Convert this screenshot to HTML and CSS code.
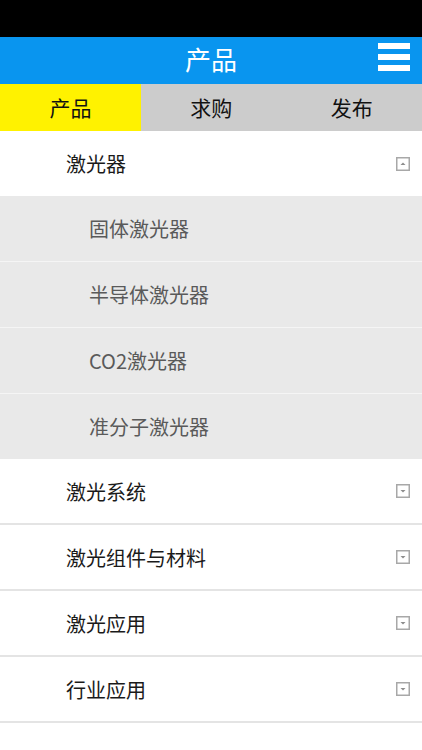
FILE: index.html
```html
<!DOCTYPE html>
<html lang="zh-CN">
<head>
<meta charset="utf-8">
<title>产品</title>
<link rel="stylesheet" href="styles.css">
</head>
<body>
<div class="status"></div>
<header class="topbar">
  <h1 class="title">产品</h1>
  <button class="menu" aria-label="菜单"><span></span><span></span><span></span></button>
</header>
<nav class="tabs">
  <div class="tab active">产品</div>
  <div class="tab">求购</div>
  <div class="tab">发布</div>
</nav>
<ul class="list">
  <li class="row open">
    <span class="label">激光器</span>
    <svg class="toggle" viewBox="0 0 14 14"><rect x="0.75" y="0.75" width="12.5" height="12.5" fill="none" stroke="#a8a8a8" stroke-width="1.5"/><path d="M4.5 8 L9.5 8 L7 5.5 Z" fill="#8c8c8c"/></svg>
  </li>
  <li class="sub">固体激光器</li>
  <li class="sub">半导体激光器</li>
  <li class="sub">CO2激光器</li>
  <li class="sub">准分子激光器</li>
  <li class="row">
    <span class="label">激光系统</span>
    <svg class="toggle" viewBox="0 0 14 14"><rect x="0.75" y="0.75" width="12.5" height="12.5" fill="none" stroke="#a8a8a8" stroke-width="1.5"/><path d="M4.5 6 L9.5 6 L7 8.5 Z" fill="#8c8c8c"/></svg>
  </li>
  <li class="row">
    <span class="label">激光组件与材料</span>
    <svg class="toggle" viewBox="0 0 14 14"><rect x="0.75" y="0.75" width="12.5" height="12.5" fill="none" stroke="#a8a8a8" stroke-width="1.5"/><path d="M4.5 6 L9.5 6 L7 8.5 Z" fill="#8c8c8c"/></svg>
  </li>
  <li class="row">
    <span class="label">激光应用</span>
    <svg class="toggle" viewBox="0 0 14 14"><rect x="0.75" y="0.75" width="12.5" height="12.5" fill="none" stroke="#a8a8a8" stroke-width="1.5"/><path d="M4.5 6 L9.5 6 L7 8.5 Z" fill="#8c8c8c"/></svg>
  </li>
  <li class="row">
    <span class="label">行业应用</span>
    <svg class="toggle" viewBox="0 0 14 14"><rect x="0.75" y="0.75" width="12.5" height="12.5" fill="none" stroke="#a8a8a8" stroke-width="1.5"/><path d="M4.5 6 L9.5 6 L7 8.5 Z" fill="#8c8c8c"/></svg>
  </li>
</ul>
</body>
</html>
```
FILE: styles.css
```css
* { box-sizing: border-box; }
html, body { margin: 0; padding: 0; background: #fff; }
body {
  font-family: "Noto Sans CJK SC", "Noto Sans", sans-serif;
  width: 422px;
}
.status { height: 37px; background: #000; }
.topbar {
  height: 47px;
  background: #0995ef;
  display: flex;
  align-items: center;
  justify-content: center;
  position: relative;
  padding-bottom: 4px;
}
.title {
  margin: 0;
  font-size: 26px;
  font-weight: 400;
  color: #fff;
  line-height: 1;
}
.menu {
  position: absolute;
  right: 12px;
  top: 6px;
  width: 32px;
  padding: 0;
  border: 0;
  background: none;
  display: flex;
  flex-direction: column;
  gap: 5px;
}
.menu span { display: block; height: 6px; background: #fff; }
.tabs {
  display: grid;
  grid-template-columns: 141px 1fr 1fr;
  height: 47px;
  background: #cccccc;
}
.tab {
  display: flex;
  align-items: center;
  justify-content: center;
  font-size: 21px;
  color: #111;
  padding-bottom: 2px;
}
.tab.active { background: #fff200; }
.list { list-style: none; margin: 0; padding: 0; }
.row {
  height: 66px;
  display: flex;
  align-items: center;
  justify-content: space-between;
  padding: 0 12px 0 66px;
  border-bottom: 2px solid #e4e4e4;
  font-size: 20px;
  color: #1a1a1a;
}
.row.open { height: 65px; border-bottom: 0; }
.toggle { width: 14px; height: 14px; display: block; }
.sub {
  height: 66px;
  display: flex;
  align-items: center;
  padding-left: 89px;
  background: #e9e9e9;
  border-top: 1px solid #f5f5f5;
  font-size: 20px;
  color: #5a5a5a;
}
.sub:nth-child(2) { border-top: 0; height: 65px; }
```
